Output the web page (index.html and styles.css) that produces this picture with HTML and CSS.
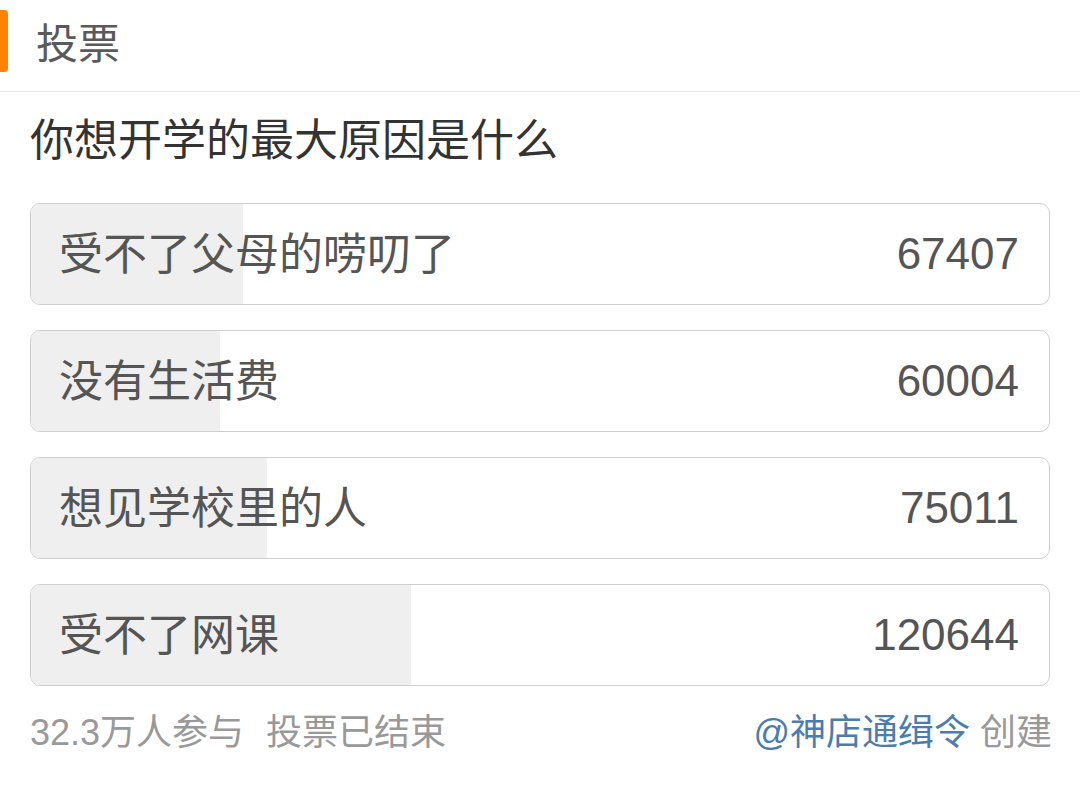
FILE: index.html
```html
<!DOCTYPE html>
<html lang="zh-CN">
<head>
    <meta charset="UTF-8">
    <meta name="viewport" content="width=device-width, initial-scale=1.0">
    <title>投票</title>
    <link rel="stylesheet" href="styles.css">
</head>
<body>
    <div class="header">
        <span class="mark"></span>
        <h1>投票</h1>
    </div>

    <div class="poll">
        <h2 class="title">你想开学的最大原因是什么</h2>

        <div class="options">
            <div class="option">
                <div class="fill" style="width: 20.86%"></div>
                <span class="label">受不了父母的唠叨了</span>
                <span class="count">67407</span>
            </div>
            <div class="option">
                <div class="fill" style="width: 18.57%"></div>
                <span class="label">没有生活费</span>
                <span class="count">60004</span>
            </div>
            <div class="option">
                <div class="fill" style="width: 23.22%"></div>
                <span class="label">想见学校里的人</span>
                <span class="count">75011</span>
            </div>
            <div class="option">
                <div class="fill" style="width: 37.34%"></div>
                <span class="label">受不了网课</span>
                <span class="count">120644</span>
            </div>
        </div>

        <div class="footer">
            <div class="stats">
                <span>32.3万人参与</span>
                <span>投票已结束</span>
            </div>
            <div class="creator">
                <a href="#">@神店通缉令</a> 创建
            </div>
        </div>
    </div>
</body>
</html>
```

FILE: styles.css
```css
body {
    margin: 0;
    background: #fff;
    font-family: "Liberation Sans", "Noto Sans CJK SC", sans-serif;
    color: #555;
}
.header {
    display: flex;
    align-items: center;
    height: 92px;
    box-sizing: border-box;
    padding-bottom: 10px;
    border-bottom: 1px solid #e8e8e8;
}
.mark {
    width: 8px;
    height: 62px;
    background: #ff8200;
    border-radius: 0 4px 4px 0;
}
.header h1 {
    margin: 0 0 0 28px;
    font-size: 42px;
    font-weight: normal;
    color: #5a5a5a;
}
.poll {
    padding: 16px 30px 0;
}
.title {
    margin: 0;
    font-size: 44px;
    line-height: 66px;
    font-weight: normal;
    color: #333;
}
.options {
    margin-top: 29px;
    display: flex;
    flex-direction: column;
    gap: 25px;
}
.option {
    position: relative;
    height: 102px;
    box-sizing: border-box;
    border: 1px solid #cfcfcf;
    border-radius: 10px;
    overflow: hidden;
    display: flex;
    align-items: center;
    justify-content: space-between;
    padding: 0 30px 7px 28px;
    font-size: 44px;
    color: #555;
}
.fill {
    position: absolute;
    left: 0;
    top: 0;
    bottom: 0;
    background: #efefef;
}
.label {
    position: relative;
}
.count {
    position: relative;
    top: 3px;
}
.footer {
    display: flex;
    justify-content: space-between;
    margin-top: 22px;
    line-height: 50px;
    font-size: 36px;
    color: #999;
}
.stats {
    display: flex;
    gap: 22px;
}
.creator {
    margin-right: -2px;
}
.creator a {
    color: #4a7cb0;
    text-decoration: none;
}
```
